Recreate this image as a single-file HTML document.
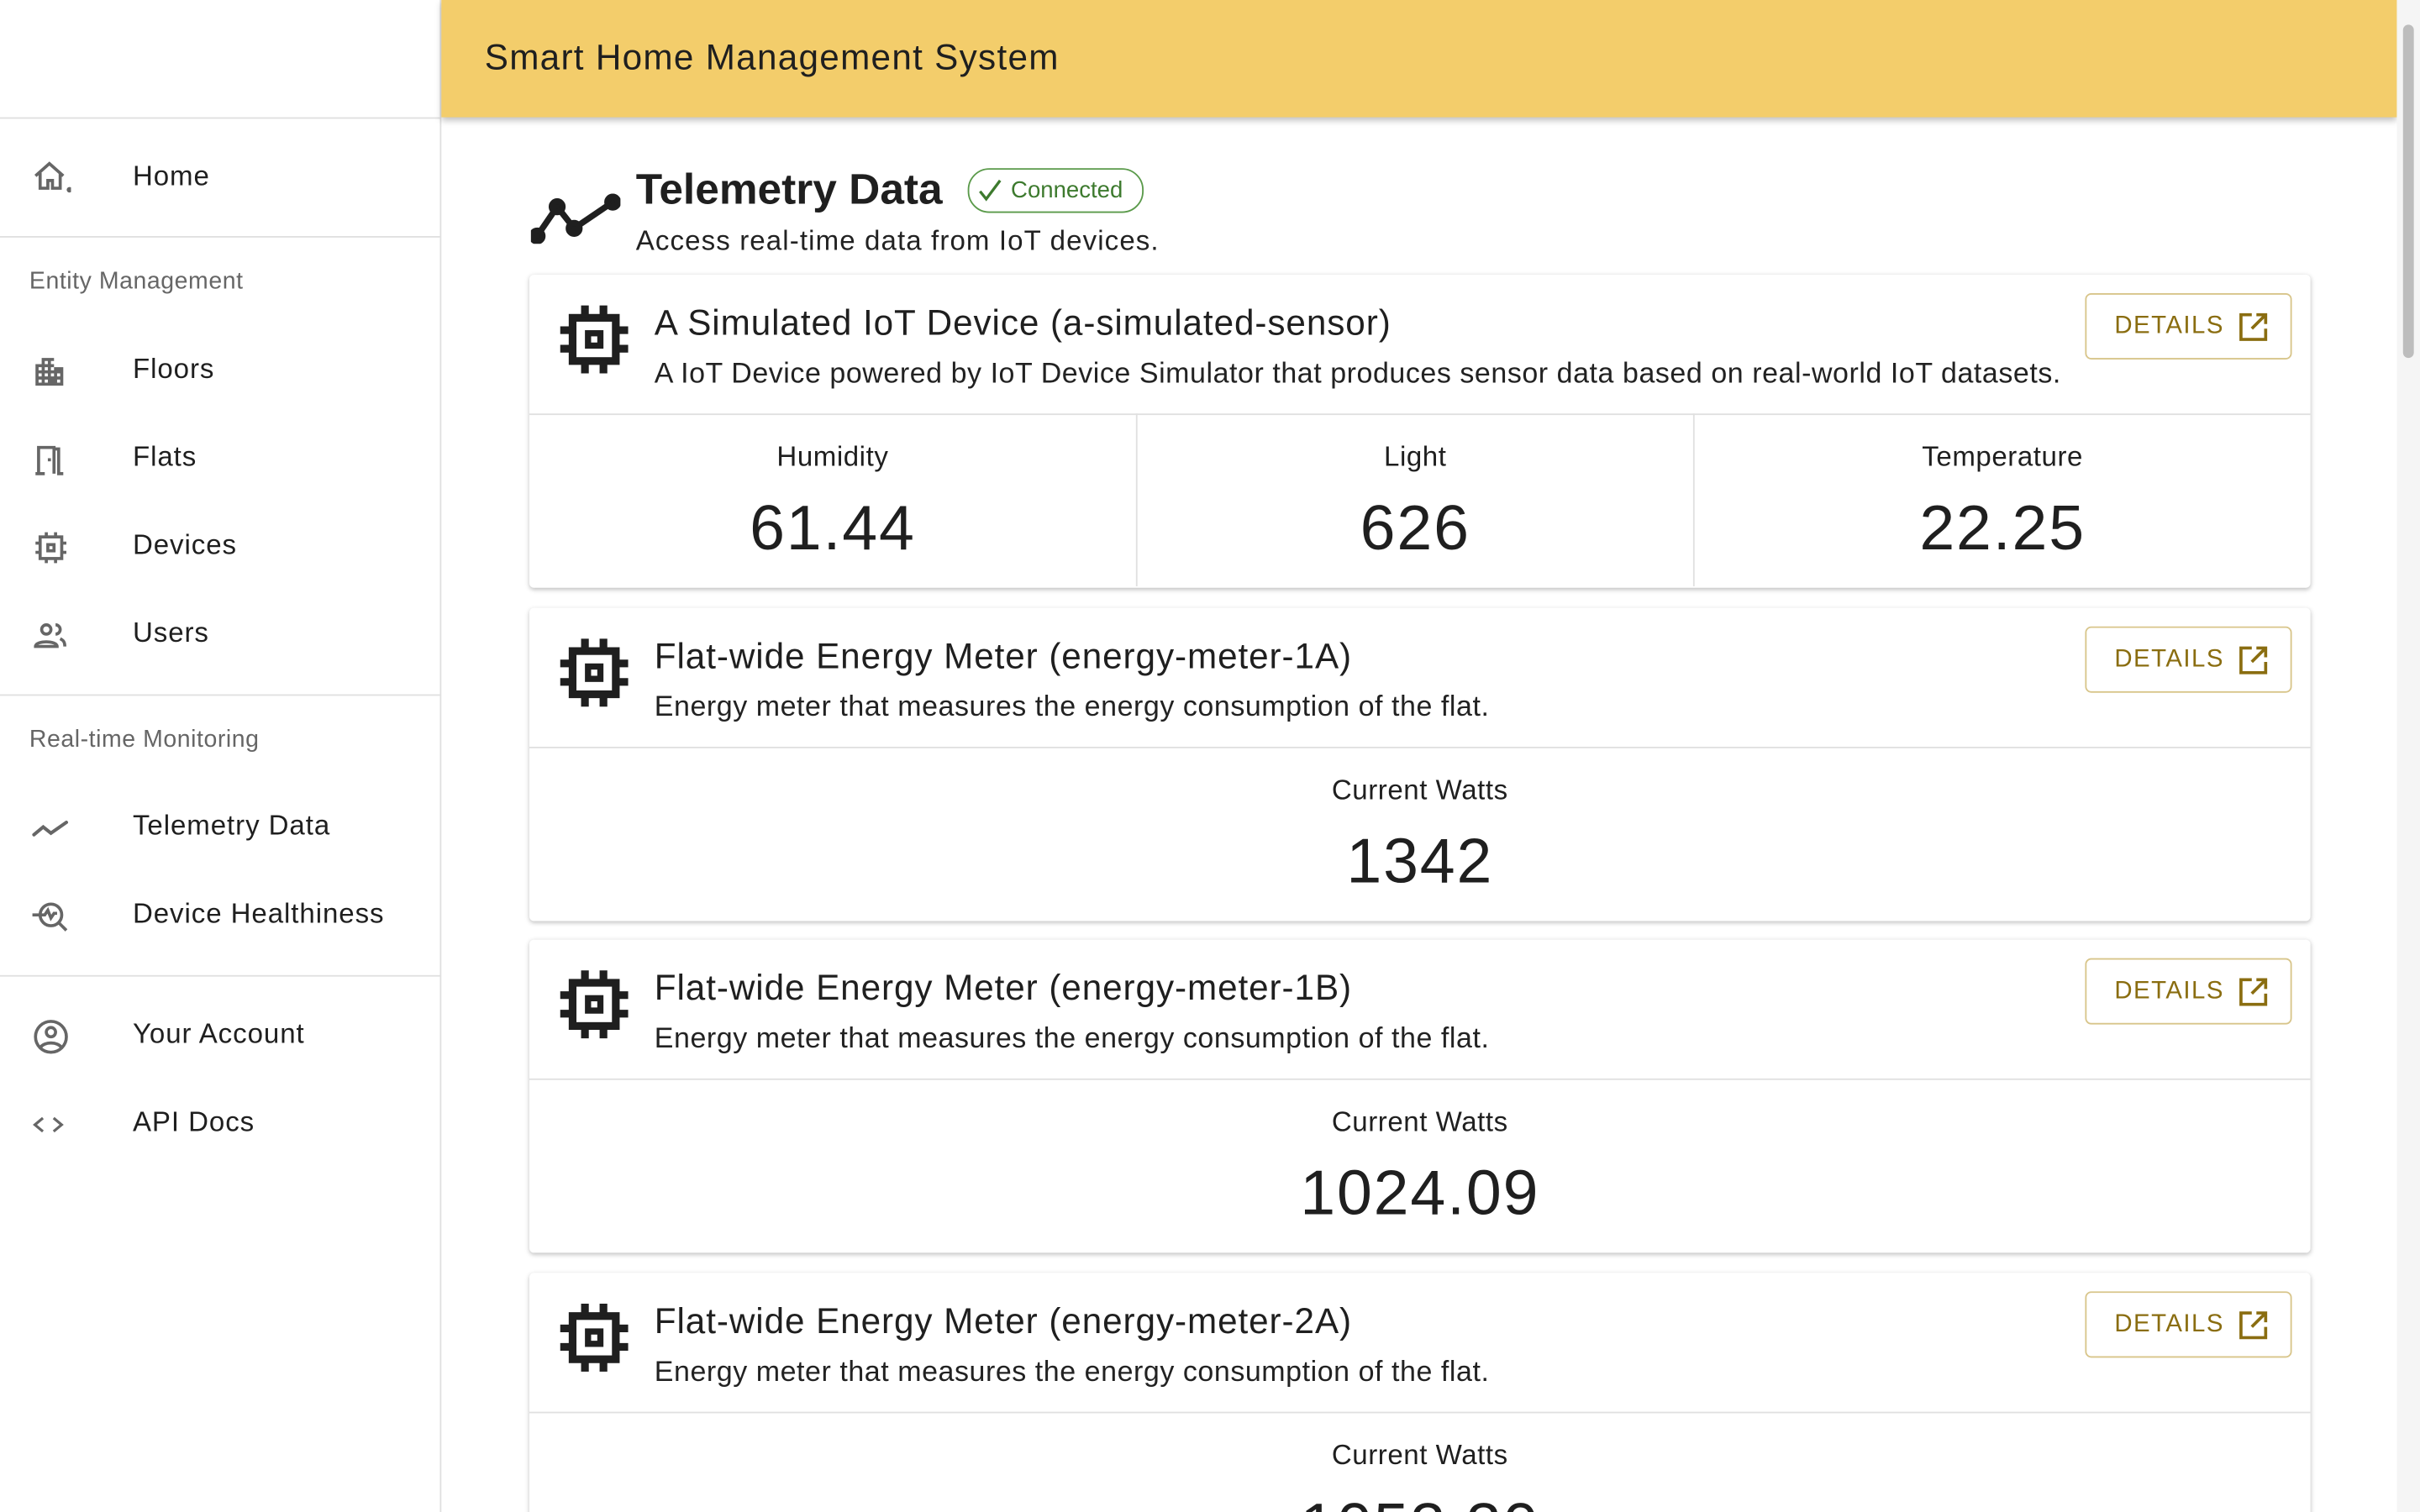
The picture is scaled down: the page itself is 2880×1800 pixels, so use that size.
<!DOCTYPE html>
<html><head><meta charset="utf-8"><style>
html,body{margin:0;padding:0;width:2880px;height:1800px;overflow:hidden;background:#fff;}
#w{width:1568px;height:980px;transform:scale(1.8367347);transform-origin:0 0;position:relative;font-family:"Liberation Sans",sans-serif;color:#1f1f1f;overflow:hidden;background:#fff}
.side{position:absolute;left:0;top:0;width:285px;height:980px;border-right:1px solid #e0e0e0;background:#fff}
.hr{position:absolute;left:0;width:285px;height:1px;background:#e0e0e0}
.it{position:absolute;left:86px;font-size:18px;color:#1f1f1f;letter-spacing:.5px}
.ic{position:absolute;left:20px;width:26px;height:26px}
.sec{position:absolute;left:19px;font-size:15.5px;color:#666;letter-spacing:.3px}
.hdr{position:absolute;left:286px;top:0;width:1267px;height:76px;background:#f3cd6b;box-shadow:0 2px 4px rgba(0,0,0,.25)}
.hdr span{position:absolute;left:28px;top:24px;font-size:23px;color:#1f1f1f;letter-spacing:.7px}
.sb{position:absolute;left:1553px;top:0;width:15px;height:980px;background:#f5f5f5}
.sb div{position:absolute;left:4px;top:16px;width:7px;height:216px;background:#bdbdbd;border-radius:4px}
.card{position:absolute;left:343px;width:1154px;background:#fff;box-shadow:0 1px 3px rgba(0,0,0,.25);border-radius:3px}
.ch{height:90px;border-bottom:1px solid #e0e0e0;position:relative}
.ch .t{position:absolute;left:81px;top:18px;font-size:23px;color:#1f1f1f;letter-spacing:.5px}
.ch .d{position:absolute;left:81px;top:53px;font-size:18.5px;color:#222;letter-spacing:.3px}
.ch svg.chip{position:absolute;left:18px;top:18px}
.btn{position:absolute;left:1008px;top:12px;width:132px;height:41px;border:1px solid #d8c58a;border-radius:4px;color:#8a6d10;font-size:16px;letter-spacing:.8px}
.btn span{position:absolute;left:18px;top:12px}
.btn svg{position:absolute;left:98px;top:11px}
.m{position:absolute;top:90px;height:112px;text-align:center}
.m .l{margin-top:18px;font-size:18px;letter-spacing:.3px}
.m .v{margin-top:12px;font-size:41px;letter-spacing:1px}
</style></head><body><div id="w">
<div class="side">
<div class="hr" style="top:76px"></div>
<svg class="ic" style="top:102px" viewBox="0 0 26 26" fill="none" stroke="#666" stroke-width="2"><path d="M3 12L12 4l9 8M6 10v10h5v-5h3v5h5V10"/><circle cx="25" cy="21" r="0.8" fill="#666"/></svg>
<div class="it" style="top:104px">Home</div>
<div class="hr" style="top:153px"></div>
<div class="sec" style="top:174px">Entity Management</div>
<svg class="ic" style="top:228px" viewBox="0 0 26 26" fill="#666"><path d="M3 22V8h4V4h8v6h6v12zM5 10v2h2v-2zm0 4v2h2v-2zm0 4v2h2v-2zm4-12v2h2V6zm0 4v2h2v-2zm0 4v2h2v-2zm0 4v2h2v-2zm4-12v2h2V6zm0 4v2h2v-2zm0 4v2h2v-2zm4 0v2h2v-2zm0 4v2h2v-2z"/></svg>
<div class="it" style="top:229px">Floors</div>
<svg class="ic" style="top:285px" viewBox="0 0 26 26" fill="none" stroke="#666" stroke-width="2"><path d="M3 22h6M5 22V5h10v17M15 6h3v16h3"/><rect x="11" y="12" width="2" height="2" fill="#666" stroke="none"/></svg>
<div class="it" style="top:286px">Flats</div>
<svg class="ic" style="top:342px" viewBox="0 0 26 26" fill="none" stroke="#666" stroke-width="2"><rect x="6" y="6" width="14" height="14"/><rect x="11" y="11" width="4" height="4"/><path d="M10 3v3M16 3v3M10 20v3M16 20v3M3 10h3M3 16h3M20 10h3M20 16h3"/></svg>
<div class="it" style="top:343px">Devices</div>
<svg class="ic" style="top:399px" viewBox="0 0 26 26" fill="none" stroke="#666" stroke-width="2"><circle cx="10" cy="9" r="3"/><path d="M3 20c0-4 14-4 14 0zM16 6a3 3 0 0 1 0 6M19 15c2 1 3 2 3 5"/></svg>
<div class="it" style="top:400px">Users</div>
<div class="hr" style="top:450px"></div>
<div class="sec" style="top:471px">Real-time Monitoring</div>
<svg class="ic" style="top:524px" viewBox="0 0 26 26" fill="none" stroke="#666" stroke-width="2.2" stroke-linecap="round"><path d="M2 17l6-5 5 4 10-7"/></svg>
<div class="it" style="top:525px">Telemetry Data</div>
<svg class="ic" style="top:581px" viewBox="0 0 26 26" fill="none" stroke="#666" stroke-width="2"><circle cx="13" cy="12" r="7"/><path d="M18 17l5 5M1 12h8l2-3 2 5 2-3h2"/></svg>
<div class="it" style="top:582px">Device Healthiness</div>
<div class="hr" style="top:632px"></div>
<svg class="ic" style="top:659px" viewBox="0 0 26 26" fill="none" stroke="#666" stroke-width="2"><circle cx="13" cy="13" r="10"/><circle cx="13" cy="10" r="3"/><path d="M6 20c3-4 11-4 14 0"/><circle cx="30" cy="21" r="0.8" fill="#666"/></svg>
<div class="it" style="top:660px">Your Account</div>
<svg class="ic" style="top:716px" viewBox="0 0 30 26" fill="none" stroke="#666" stroke-width="2"><path d="M9 8l-6 5 6 5M17 8l6 5-6 5"/></svg>
<div class="it" style="top:717px">API Docs</div>
</div>
<div class="hdr"><span>Smart Home Management System</span></div>
<svg style="position:absolute;left:344px;top:124px" width="58" height="34" viewBox="0 0 58 34" fill="none" stroke="#1f1f1f" stroke-width="4" stroke-linecap="round"><path d="M4 29l13-19 11 14 25-17"/><circle cx="4" cy="29" r="3.5" fill="#1f1f1f"/><circle cx="17" cy="10" r="3.5" fill="#1f1f1f"/><circle cx="28" cy="24" r="3.5" fill="#1f1f1f"/><circle cx="53" cy="7" r="3.5" fill="#1f1f1f"/></svg>
<div style="position:absolute;left:412px;top:107px;font-size:28px;font-weight:bold;color:#1f1f1f">Telemetry Data</div>
<div style="position:absolute;left:627px;top:109px;width:112px;height:27px;border:1px solid #5a9a4a;border-radius:14px;color:#3d7a2e;font-size:15px"><svg style="position:absolute;left:6px;top:6px" width="16" height="15" viewBox="0 0 16 15" fill="none" stroke="#3d7a2e" stroke-width="1.8"><path d="M1 8l4 5 9-12"/></svg><span style="position:absolute;left:27px;top:5px">Connected</span></div>
<div style="position:absolute;left:412px;top:146px;font-size:18px;color:#222;letter-spacing:.6px">Access real-time data from IoT devices.</div>

<div class="card" style="top:178px;height:203px">
<div class="ch"><svg class="chip" width="48" height="48" viewBox="0 0 48 48" fill="none" stroke="#1f1f1f" stroke-width="5"><rect x="10" y="10" width="28" height="28"/><rect x="20" y="20" width="8" height="8" stroke-width="4"/><path d="M18 2v8M30 2v8M18 38v8M30 38v8M2 18h8M2 30h8M38 18h8M38 30h8"/></svg>
<div class="t">A Simulated IoT Device (a-simulated-sensor)</div><div class="d">A IoT Device powered by IoT Device Simulator that produces sensor data based on real-world IoT datasets.</div>
<div class="btn"><span>DETAILS</span><svg width="20" height="20" viewBox="0 0 20 20" fill="none" stroke="#8a6d10" stroke-width="2"><path d="M9 2H2v16h16v-7M12 2h6v6M18 2L9 11"/></svg></div></div>
<div class="m" style="left:0;width:393px;border-right:1px solid #e0e0e0"><div class="l">Humidity</div><div class="v">61.44</div></div>
<div class="m" style="left:394px;width:360px;border-right:1px solid #e0e0e0"><div class="l">Light</div><div class="v">626</div></div>
<div class="m" style="left:755px;width:399px"><div class="l">Temperature</div><div class="v">22.25</div></div>
</div>

<div class="card" style="top:394px;height:203px">
<div class="ch"><svg class="chip" width="48" height="48" viewBox="0 0 48 48" fill="none" stroke="#1f1f1f" stroke-width="5"><rect x="10" y="10" width="28" height="28"/><rect x="20" y="20" width="8" height="8" stroke-width="4"/><path d="M18 2v8M30 2v8M18 38v8M30 38v8M2 18h8M2 30h8M38 18h8M38 30h8"/></svg>
<div class="t">Flat-wide Energy Meter (energy-meter-1A)</div><div class="d">Energy meter that measures the energy consumption of the flat.</div>
<div class="btn"><span>DETAILS</span><svg width="20" height="20" viewBox="0 0 20 20" fill="none" stroke="#8a6d10" stroke-width="2"><path d="M9 2H2v16h16v-7M12 2h6v6M18 2L9 11"/></svg></div></div>
<div class="m" style="left:0;width:1154px"><div class="l">Current Watts</div><div class="v">1342</div></div>
</div>

<div class="card" style="top:609px;height:203px">
<div class="ch"><svg class="chip" width="48" height="48" viewBox="0 0 48 48" fill="none" stroke="#1f1f1f" stroke-width="5"><rect x="10" y="10" width="28" height="28"/><rect x="20" y="20" width="8" height="8" stroke-width="4"/><path d="M18 2v8M30 2v8M18 38v8M30 38v8M2 18h8M2 30h8M38 18h8M38 30h8"/></svg>
<div class="t">Flat-wide Energy Meter (energy-meter-1B)</div><div class="d">Energy meter that measures the energy consumption of the flat.</div>
<div class="btn"><span>DETAILS</span><svg width="20" height="20" viewBox="0 0 20 20" fill="none" stroke="#8a6d10" stroke-width="2"><path d="M9 2H2v16h16v-7M12 2h6v6M18 2L9 11"/></svg></div></div>
<div class="m" style="left:0;width:1154px"><div class="l">Current Watts</div><div class="v">1024.09</div></div>
</div>

<div class="card" style="top:825px;height:203px">
<div class="ch"><svg class="chip" width="48" height="48" viewBox="0 0 48 48" fill="none" stroke="#1f1f1f" stroke-width="5"><rect x="10" y="10" width="28" height="28"/><rect x="20" y="20" width="8" height="8" stroke-width="4"/><path d="M18 2v8M30 2v8M18 38v8M30 38v8M2 18h8M2 30h8M38 18h8M38 30h8"/></svg>
<div class="t">Flat-wide Energy Meter (energy-meter-2A)</div><div class="d">Energy meter that measures the energy consumption of the flat.</div>
<div class="btn"><span>DETAILS</span><svg width="20" height="20" viewBox="0 0 20 20" fill="none" stroke="#8a6d10" stroke-width="2"><path d="M9 2H2v16h16v-7M12 2h6v6M18 2L9 11"/></svg></div></div>
<div class="m" style="left:0;width:1154px"><div class="l">Current Watts</div><div class="v">1053.30</div></div>
</div>

<div class="sb"><div></div></div>
</div></body></html>
